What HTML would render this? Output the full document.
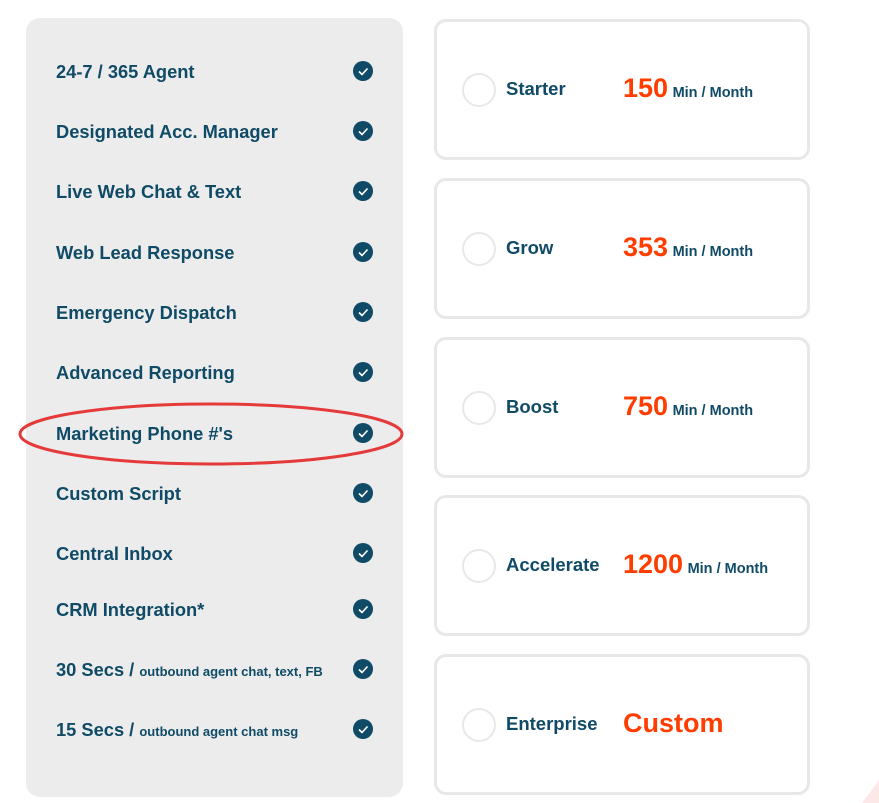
<!DOCTYPE html>
<html><head><style>
*{margin:0;padding:0;box-sizing:border-box}
body{width:879px;height:803px;background:#fff;position:relative;overflow:hidden;font-family:"Liberation Sans",sans-serif;font-weight:bold;color:#0f4a66}
.panel{position:absolute;left:26px;top:18px;width:377px;height:779px;background:#ececec;border-radius:14px}
.row{position:absolute;left:56px;font-size:18.3px;line-height:20px;white-space:nowrap}
.row small{font-size:13px}
.chk{position:absolute;left:353px;width:20px;height:20px;border-radius:50%;background:#0f4a66}
.chk svg{position:absolute;left:0;top:0}
.card{position:absolute;left:434px;width:376px;height:141px;border:3px solid #e8e8e8;border-radius:12px;background:#fff}
.radio{position:absolute;left:25px;top:50%;margin-top:-17px;width:34px;height:34px;border:2px solid #e8e8e8;border-radius:50%}
.name{position:absolute;left:69px;top:50%;margin-top:-12px;font-size:18.5px;line-height:22px}
.num{position:absolute;left:186px;top:50%;margin-top:-19px;font-size:27px;line-height:34px;color:#ff3d00;white-space:nowrap}
.num span{font-size:14.5px;color:#0f4a66;margin-left:-3px}
</style></head><body>
<div class="panel"></div>
<div class="row" style="top:62px">24-7 / 365 Agent</div>
<div class="row" style="top:122px">Designated Acc. Manager</div>
<div class="row" style="top:182px">Live Web Chat &amp; Text</div>
<div class="row" style="top:243px">Web Lead Response</div>
<div class="row" style="top:303px">Emergency Dispatch</div>
<div class="row" style="top:363px">Advanced Reporting</div>
<div class="row" style="top:424px">Marketing Phone #'s</div>
<div class="row" style="top:484px">Custom Script</div>
<div class="row" style="top:544px">Central Inbox</div>
<div class="row" style="top:600px">CRM Integration*</div>
<div class="row" style="top:660px">30 Secs / <small>outbound agent chat, text, FB</small></div>
<div class="row" style="top:720px">15 Secs / <small>outbound agent chat msg</small></div>

<div class="chk" style="top:61px"><svg width="20" height="20"><path d="M6 10.5l3 3 5.5-6" stroke="#fff" stroke-width="1.6" fill="none"/></svg></div>
<div class="chk" style="top:121px"><svg width="20" height="20"><path d="M6 10.5l3 3 5.5-6" stroke="#fff" stroke-width="1.6" fill="none"/></svg></div>
<div class="chk" style="top:181px"><svg width="20" height="20"><path d="M6 10.5l3 3 5.5-6" stroke="#fff" stroke-width="1.6" fill="none"/></svg></div>
<div class="chk" style="top:242px"><svg width="20" height="20"><path d="M6 10.5l3 3 5.5-6" stroke="#fff" stroke-width="1.6" fill="none"/></svg></div>
<div class="chk" style="top:302px"><svg width="20" height="20"><path d="M6 10.5l3 3 5.5-6" stroke="#fff" stroke-width="1.6" fill="none"/></svg></div>
<div class="chk" style="top:362px"><svg width="20" height="20"><path d="M6 10.5l3 3 5.5-6" stroke="#fff" stroke-width="1.6" fill="none"/></svg></div>
<div class="chk" style="top:423px"><svg width="20" height="20"><path d="M6 10.5l3 3 5.5-6" stroke="#fff" stroke-width="1.6" fill="none"/></svg></div>
<div class="chk" style="top:483px"><svg width="20" height="20"><path d="M6 10.5l3 3 5.5-6" stroke="#fff" stroke-width="1.6" fill="none"/></svg></div>
<div class="chk" style="top:543px"><svg width="20" height="20"><path d="M6 10.5l3 3 5.5-6" stroke="#fff" stroke-width="1.6" fill="none"/></svg></div>
<div class="chk" style="top:599px"><svg width="20" height="20"><path d="M6 10.5l3 3 5.5-6" stroke="#fff" stroke-width="1.6" fill="none"/></svg></div>
<div class="chk" style="top:659px"><svg width="20" height="20"><path d="M6 10.5l3 3 5.5-6" stroke="#fff" stroke-width="1.6" fill="none"/></svg></div>
<div class="chk" style="top:719px"><svg width="20" height="20"><path d="M6 10.5l3 3 5.5-6" stroke="#fff" stroke-width="1.6" fill="none"/></svg></div>

<svg style="position:absolute;left:0;top:0" width="879" height="803"><ellipse cx="211" cy="434" rx="191" ry="30" fill="none" stroke="#e53a3a" stroke-width="3"/>
<path d="M879 780 L862 803 L879 803Z" fill="#fde8e8"/></svg>

<div class="card" style="top:19px"><div class="radio"></div><div class="name">Starter</div><div class="num">150 <span>Min / Month</span></div></div>
<div class="card" style="top:178px"><div class="radio"></div><div class="name">Grow</div><div class="num">353 <span>Min / Month</span></div></div>
<div class="card" style="top:337px"><div class="radio"></div><div class="name">Boost</div><div class="num">750 <span>Min / Month</span></div></div>
<div class="card" style="top:495px"><div class="radio"></div><div class="name">Accelerate</div><div class="num">1200 <span>Min / Month</span></div></div>
<div class="card" style="top:654px"><div class="radio"></div><div class="name">Enterprise</div><div class="num">Custom</div></div>
</body></html>
